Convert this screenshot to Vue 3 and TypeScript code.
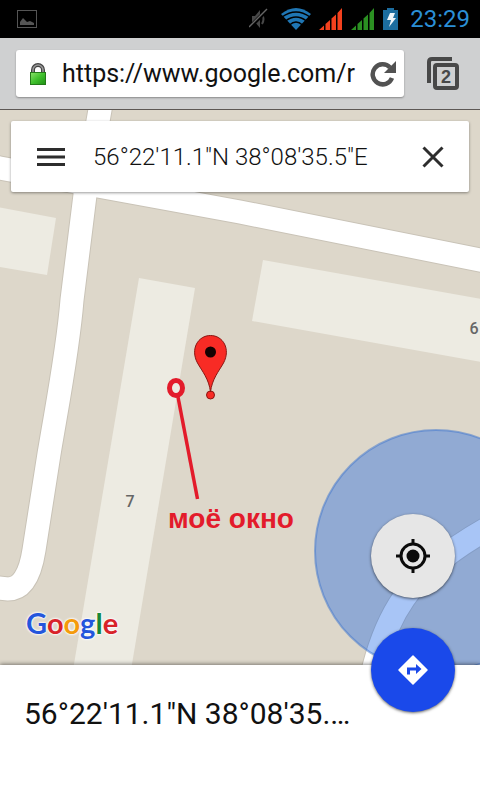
<script setup lang="ts">
import { ref } from 'vue'

const address = ref('https://www.google.com/r')
const query = ref('56°22\'11.1"N 38°08\'35.5"E')
const place = '56°22\'11.1"N 38°08\'35.5"E'
const openTabs = ref(2)

const logo = [
  { letter: 'G', tone: 'blue' },
  { letter: 'o', tone: 'red' },
  { letter: 'o', tone: 'yellow' },
  { letter: 'g', tone: 'blue' },
  { letter: 'l', tone: 'green' },
  { letter: 'e', tone: 'red' },
]

function clearQuery(): void {
  query.value = ''
}
</script>

<template>
  <div class="screen">
    <header class="status">
      <svg class="picture" width="20" height="18" viewBox="0 0 20 18" aria-hidden="true">
        <rect x=".5" y=".5" width="19" height="17" fill="none" stroke="#555" />
        <path d="M3 15v-3l3-4 2 2 2 2 3-1 4 2v2z" fill="#555" />
      </svg>
      <div class="indicators">
        <svg width="20" height="22" viewBox="0 0 20 22" aria-hidden="true">
          <path d="M3 8h3l5-6v18l-5-6H3z" fill="#484848" />
          <path d="M13 6q3 5 0 10" fill="none" stroke="#484848" stroke-width="2" />
          <path d="M0 20 18 2" stroke="#000" stroke-width="4" />
          <path d="M0 19 18 1" stroke="#666" stroke-width="1.5" />
        </svg>
        <svg class="wifi" width="30" height="22" viewBox="0 0 30 22" aria-hidden="true">
          <path d="M0 6Q15-6 30 6L15 22z" fill="#1f76b4" />
          <path d="M1 9q14-10 28 0M4.500 13q10.500-8 21 0M8.500 17q6.500-6 13 0" fill="none" stroke="#000" stroke-width="1.500" />
        </svg>
        <svg class="signal" width="24" height="22" viewBox="0 0 24 22" aria-hidden="true">
          <path d="M0 22 5 17.500V22zM6.500 22v-6L11 12v10zM12.500 22V10.500L17 6.500V22zM18.500 22V5L23 0v22z" fill="#f4411e" />
        </svg>
        <svg class="signal" width="24" height="22" viewBox="0 0 24 22" aria-hidden="true">
          <path d="M0 22 5 17.500V22zM6.500 22v-6L11 12v10zM12.500 22V10.500L17 6.500V22zM18.500 22V5L23 0v22z" fill="#2b9022" />
        </svg>
        <svg width="15" height="22" viewBox="0 0 15 22" aria-hidden="true">
          <path d="M4 0h7v2h4v20H0V2h4z" fill="#1c6d9f" />
          <path d="m7 5 5 0-2 5h3l-7 9 2-7H4z" fill="#eef6fb" />
        </svg>
        <time class="clock">23:29</time>
      </div>
    </header>

    <div class="toolbar">
      <div class="address">
        <svg width="16" height="22" viewBox="0 0 16 22" aria-hidden="true">
          <defs>
            <linearGradient id="lock-body" x1="0" y1="0" x2="1" y2="1">
              <stop offset="0" stop-color="#8be36a" />
              <stop offset=".5" stop-color="#3fc02c" />
              <stop offset="1" stop-color="#1f8f14" />
            </linearGradient>
          </defs>
          <path d="M3 10V7a5 5 0 0 1 10 0v3" fill="none" stroke="#444" stroke-width="4" />
          <path d="M3 10V7a5 5 0 0 1 10 0v3" fill="none" stroke="#999" stroke-width="1.500" />
          <rect x=".5" y="9.500" width="15" height="12" fill="url(#lock-body)" stroke="#237a18" />
        </svg>
        <input v-model="address" class="url" type="text" aria-label="Address" spellcheck="false" />
        <button class="plain" type="button" aria-label="Reload">
          <svg width="26" height="26" viewBox="0 0 26 26">
            <path d="M20 6.500A10 10 0 1 0 22 17" fill="none" stroke="#525252" stroke-width="4.500" />
            <path d="M26 0v12H14z" fill="#525252" />
          </svg>
        </button>
      </div>
      <button class="plain tabs" type="button" aria-label="Open tabs">
        <svg width="32" height="33" viewBox="0 0 32 33" aria-hidden="true">
          <path d="M2 26V5q0-3 3-3h20" fill="none" stroke="#484848" stroke-width="4" />
          <rect x="8" y="8" width="22" height="23" rx="2" fill="none" stroke="#484848" stroke-width="4" />
          <text class="tab-count" x="19" y="26">{{ openTabs }}</text>
        </svg>
      </button>
    </div>

    <main class="map">
      <svg class="canvas" viewBox="0 110 480 555" preserveAspectRatio="xMidYMid slice" role="img" aria-label="Map">
        <g class="building">
          <path d="M-40 200 56 218 47 275-40 260z" />
          <path d="M139 278 195 288 131 670H73z" />
          <path d="M263 260 520 306V369L252 321z" />
        </g>
        <g class="road casing">
          <path d="M-40 161 0 168 240 212 520 268" />
          <path d="M101 104 85 195 72 300C68 350 58 400 49 454L34 550Q28 589 8 589L-40 584" />
          <path d="M520 509 492 526Q430 560 404 598 383 628 372 675" />
        </g>
        <g class="road">
          <path d="M-40 161 0 168 240 212 520 268" />
          <path d="M101 104 85 195 72 300C68 350 58 400 49 454L34 550Q28 589 8 589L-40 584" />
          <path d="M520 509 492 526Q430 560 404 598 383 628 372 675" />
        </g>
        <circle class="accuracy" cx="436" cy="551" r="121" />
        <text class="house" x="130" y="507">7</text>
        <text class="house" x="474" y="334">6</text>
        <g class="pin">
          <circle cx="210.500" cy="395" r="4" />
          <path d="M210.500 392C209 379 202 371 197.500 363 190 349 198 335.500 210.500 335.500S231 349 223.500 363C219 371 212 379 210.500 392z" />
          <circle class="pin-eye" cx="210.500" cy="352" r="5.500" />
        </g>
        <g class="note">
          <ellipse cx="176" cy="388" rx="6.500" ry="7.500" stroke-width="5" />
          <path d="M178 397 197.500 499" stroke-width="3.500" />
          <text x="168" y="528">моё окно</text>
        </g>
      </svg>

      <form class="search" @submit.prevent>
        <button class="plain" type="button" aria-label="Menu">
          <svg width="28" height="20" viewBox="0 0 28 20"><path d="M0 2.500h28M0 10h28M0 17.500h28" stroke="#2d2d2d" stroke-width="3" /></svg>
        </button>
        <input v-model="query" class="query" type="text" aria-label="Search the map" spellcheck="false" />
        <button class="plain" type="button" aria-label="Clear" @click="clearQuery">
          <svg width="22" height="22" viewBox="0 0 22 22"><path d="m1.500 1.500 19 19m0-19-19 19" stroke="#2d2d2d" stroke-width="3" /></svg>
        </button>
      </form>

      <div class="logo"><span v-for="(part, i) in logo" :key="i" :class="part.tone">{{ part.letter }}</span></div>

      <div class="actions">
        <button class="round" type="button" aria-label="My location">
          <svg width="34" height="34" viewBox="0 0 34 34">
            <circle cx="17" cy="17" r="12" fill="none" stroke="#0b0b0b" stroke-width="3" />
            <circle cx="17" cy="17" r="6.500" fill="#0b0b0b" />
            <path d="M17 0v5M17 29v5M0 17h5M29 17h5" stroke="#0b0b0b" stroke-width="3" />
          </svg>
        </button>
        <button class="round primary" type="button" aria-label="Directions">
          <svg width="30" height="30" viewBox="0 0 30 30">
            <path d="M15 1 29 15 15 29 1 15z" fill="#fff" stroke="#fff" stroke-width="1.500" stroke-linejoin="round" />
            <path d="M9 19.500v-7h9V9l5.500 5-5.500 5v-3.500h-6v4z" fill="#1a49ea" />
          </svg>
        </button>
      </div>
    </main>

    <section class="sheet">
      <h1 class="place">{{ place }}</h1>
    </section>
  </div>
</template>

<style>
body {
  margin: 0;
}
</style>

<style scoped>
.screen {
  display: flex;
  flex-direction: column;
  min-height: 100vh;
  background: #fff;
  font-family: Roboto, "Liberation Sans", sans-serif;
}

.status {
  display: flex;
  align-items: center;
  justify-content: space-between;
  height: 38px;
  padding: 0 10px 0 17px;
  background: #000;
}

.indicators {
  display: flex;
  align-items: center;
  gap: 8px;
}

.wifi {
  margin-left: 4px;
}

.clock {
  margin-left: 4px;
  color: #2b8fd6;
  font-size: 24px;
  line-height: 40px;
}

.toolbar {
  display: flex;
  align-items: center;
  gap: 23px;
  box-sizing: border-box;
  height: 72px;
  padding: 0 21px 0 16px;
  border-bottom: 1px solid #5d5855;
  background: #cfd0d1;
}

.address {
  display: flex;
  flex: 1;
  align-items: center;
  min-width: 0;
  height: 47px;
  padding: 0 8px 0 14px;
  border-radius: 3px;
  background: #fff;
  box-shadow: 0 1px 2px rgba(0, 0, 0, 0.35);
}

input {
  flex: 1;
  min-width: 0;
  padding: 0;
  border: 0;
  outline: 0;
  background: transparent;
  font-family: inherit;
}

.url {
  margin: 0 8px 0 16px;
  color: #111;
  font-size: 25px;
  line-height: 32px;
}

.plain {
  display: flex;
  padding: 0;
  border: 0;
  background: transparent;
}

.tab-count {
  fill: #484848;
  font-size: 18px;
  font-weight: 700;
  text-anchor: middle;
}

.map {
  position: relative;
  flex: 1;
  min-height: 320px;
  background: #ddd7ca;
}

.canvas {
  position: absolute;
  inset: 0;
  width: 100%;
  height: 100%;
}

.building {
  fill: #edebe2;
}

.road {
  fill: none;
  stroke: #fff;
  stroke-width: 23px;
}

.casing {
  stroke: #c9c3b7;
  stroke-width: 25px;
}

.accuracy {
  fill: rgba(0, 85, 230, 0.34);
  stroke: rgba(60, 115, 205, 0.5);
  stroke-width: 2px;
}

.house {
  fill: #666;
  font-size: 16px;
  font-weight: 500;
  text-anchor: middle;
}

.pin {
  fill: #f82b25;
  stroke: #8c1613;
  stroke-width: 1px;
}

.pin-eye {
  fill: #140202;
  stroke: none;
}

.note {
  fill: none;
  stroke: #e31b2b;
}

.note ellipse {
  fill: #edebe2;
}

.note text {
  fill: #e31b2b;
  stroke: none;
  font-family: "Liberation Sans", sans-serif;
  font-size: 28px;
  font-weight: 700;
}

.search {
  position: relative;
  display: flex;
  align-items: center;
  gap: 28px;
  height: 71px;
  margin: 11px 11px 0;
  padding: 0 25px 0 26px;
  border-radius: 2px;
  background: #fff;
  box-shadow: 0 1px 3px rgba(0, 0, 0, 0.4);
}

.query {
  color: #111;
  font-size: 24px;
  font-weight: 300;
  line-height: 32px;
}

.logo {
  position: absolute;
  bottom: 22px;
  left: 26px;
  font-family: Lato, sans-serif;
  font-size: 29px;
  font-weight: 700;
  line-height: 40px;
  text-shadow: 0 0 2px #fff, 0 0 2px #fff, 0 0 3px #fff;
}

.blue {
  color: #2456dc;
}

.red {
  color: #d8232a;
}

.yellow {
  color: #f49b0b;
}

.green {
  color: #16873a;
}

.actions {
  position: absolute;
  right: 25px;
  bottom: -47px;
  z-index: 1;
  display: flex;
  flex-direction: column;
  gap: 30px;
}

.round {
  display: flex;
  align-items: center;
  justify-content: center;
  width: 84px;
  height: 84px;
  padding: 0;
  border: 0;
  border-radius: 50%;
  background: #e6e6e6;
  box-shadow: 0 1px 3px rgba(0, 0, 0, 0.6);
}

.primary {
  background: #1a49ea;
}

.sheet {
  position: relative;
  box-sizing: border-box;
  min-height: 135px;
  padding: 28px 124px 20px 24px;
  background: #fff;
  box-shadow: 0 -1px 4px rgba(0, 0, 0, 0.45);
}

.place {
  overflow: hidden;
  margin: 0;
  color: #111;
  font-size: 30px;
  font-weight: 400;
  line-height: 42px;
  text-overflow: ellipsis;
  white-space: nowrap;
}
</style>
